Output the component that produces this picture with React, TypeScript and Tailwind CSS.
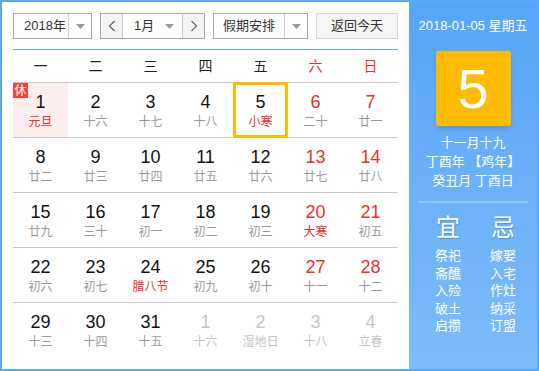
const days = [
  [
    { d: 1, l: "元旦", hol: true, fest: true },
    { d: 2, l: "十六" },
    { d: 3, l: "十七" },
    { d: 4, l: "十八" },
    { d: 5, l: "小寒", fest: true, sel: true },
    { d: 6, l: "二十", we: true },
    { d: 7, l: "廿一", we: true },
  ],
  [
    { d: 8, l: "廿二" },
    { d: 9, l: "廿三" },
    { d: 10, l: "廿四" },
    { d: 11, l: "廿五" },
    { d: 12, l: "廿六" },
    { d: 13, l: "廿七", we: true },
    { d: 14, l: "廿八", we: true },
  ],
  [
    { d: 15, l: "廿九" },
    { d: 16, l: "三十" },
    { d: 17, l: "初一" },
    { d: 18, l: "初二" },
    { d: 19, l: "初三" },
    { d: 20, l: "大寒", we: true, fest: true },
    { d: 21, l: "初五", we: true },
  ],
  [
    { d: 22, l: "初六" },
    { d: 23, l: "初七" },
    { d: 24, l: "腊八节", fest: true },
    { d: 25, l: "初九" },
    { d: 26, l: "初十" },
    { d: 27, l: "十一", we: true },
    { d: 28, l: "十二", we: true },
  ],
  [
    { d: 29, l: "十三" },
    { d: 30, l: "十四" },
    { d: 31, l: "十五" },
    { d: 1, l: "十六", other: true },
    { d: 2, l: "湿地日", other: true },
    { d: 3, l: "十八", other: true },
    { d: 4, l: "立春", other: true },
  ],
]

type Day = { d: number; l: string; hol?: boolean; fest?: boolean; sel?: boolean; we?: boolean; other?: boolean }

const weekdays = ["一", "二", "三", "四", "五", "六", "日"]
const yi = ["祭祀", "斋醮", "入殓", "破土", "启攒"]
const ji = ["嫁娶", "入宅", "作灶", "纳采", "订盟"]

function Caret() {
  return (
    <svg width="9" height="5" viewBox="0 0 9 5">
      <path d="M0 0h9L4.5 5z" fill="#999" />
    </svg>
  )
}

function Chevron({ dir }: { dir: "l" | "r" }) {
  return (
    <svg width="8" height="12" viewBox="0 0 8 12">
      <path
        d={dir === "l" ? "M6.5 1L1.5 6l5 5" : "M1.5 1l5 5-5 5"}
        stroke="#666"
        strokeWidth="1.2"
        fill="none"
      />
    </svg>
  )
}

function Cell({ day }: { day: Day }) {
  const numColor = day.other ? "text-[#c4c4c4]" : day.we ? "text-[#e8302e]" : "text-[#111]"
  const lunarColor = day.other ? "text-[#c4c4c4]" : day.fest ? "text-[#e8302e]" : "text-[#999]"
  return (
    <div className={`relative flex flex-col items-center ${day.hol ? "bg-[#fdeeee]" : ""}`}>
      {day.hol && (
        <span className="absolute left-0 top-0 flex h-[15px] w-[15px] items-center justify-center bg-[#f0413c] text-[12px] leading-none text-white">
          休
        </span>
      )}
      {day.sel && <div className="absolute inset-x-0 -top-px -bottom-px border-[3px] border-[#ffbb00]" />}
      <div className={`pt-[9px] text-[18px] leading-[20px] ${numColor}`}>{day.d}</div>
      <div className={`mt-[2px] text-[12px] leading-[16px] ${lunarColor}`}>{day.l}</div>
    </div>
  )
}

export default function App() {
  return (
    <div className="flex h-[371px] w-[539px] border-2 border-[#5ca8f5] bg-white font-['Liberation_Sans','Noto_Sans_CJK_SC',sans-serif]">
      <div className="w-[407px] px-[11px] pt-[11px]">
        <div className="flex h-[26px] justify-between text-[13px] text-[#333]">
          <div className="flex w-[79px] border border-[#a6a6a6]">
            <div className="flex flex-1 items-center pl-[10px]">2018年</div>
            <div className="flex w-[23px] items-center justify-center border-l border-[#c8c8c8]">
              <Caret />
            </div>
          </div>
          <div className="flex w-[105px] border border-[#a6a6a6]">
            <div className="flex w-[22px] items-center justify-center border-r border-[#c8c8c8] bg-[#f5f5f5]">
              <Chevron dir="l" />
            </div>
            <div className="flex flex-1 items-center justify-between pl-[11px] pr-[8px]">
              <span>1月</span>
              <Caret />
            </div>
            <div className="flex w-[22px] items-center justify-center border-l border-[#c8c8c8] bg-[#f5f5f5]">
              <Chevron dir="r" />
            </div>
          </div>
          <div className="flex w-[95px] border border-[#a6a6a6]">
            <div className="flex flex-1 items-center justify-center">假期安排</div>
            <div className="flex w-[23px] items-center justify-center border-l border-[#c8c8c8]">
              <Caret />
            </div>
          </div>
          <div className="flex w-[82px] items-center justify-center border border-[#d4d4d4] bg-[#f6f6f6]">
            返回今天
          </div>
        </div>
        <div className="mt-[10px] h-px bg-[#5ca8f5]" />
        <div className="grid h-[33px] grid-cols-7 border-b border-[#c8c8c8] text-[14px]">
          {weekdays.map((w, i) => (
            <div key={w} className={`flex items-center justify-center ${i > 4 ? "text-[#e8302e]" : "text-[#222]"}`}>
              {w}
            </div>
          ))}
        </div>
        {days.map((row, r) => (
          <div
            key={r}
            className={`grid h-[55px] grid-cols-7 ${r < days.length - 1 ? "border-b border-[#c8c8c8]" : ""}`}
          >
            {row.map((day, i) => (
              <Cell key={i} day={day} />
            ))}
          </div>
        ))}
      </div>
      <div className="flex flex-1 flex-col items-center bg-linear-to-b from-[#56a5f7] to-[#7dbcf9] pt-[14px] text-white">
        <div className="text-[13px] leading-[20px]">2018-01-05 星期五</div>
        <div className="mt-[15px] flex h-[75px] w-[75px] items-center justify-center rounded-[3px] bg-[#ffbb00] text-[56px] leading-none shadow-md">
          5
        </div>
        <div className="mt-[7px] flex flex-col items-center text-[13px] leading-[19px]">
          <div>十一月十九</div>
          <div>丁酉年 【鸡年】</div>
          <div>癸丑月 丁酉日</div>
        </div>
        <div className="mt-[11px] h-[2px] w-[110px] bg-white/30" />
        <div className="mt-[10px] flex gap-[29px] pl-[5px]">
          {[
            { t: "宜", list: yi },
            { t: "忌", list: ji },
          ].map((col) => (
            <div key={col.t} className="flex flex-col items-center">
              <div className="text-[24px] leading-[30px] [text-shadow:1px_1px_1px_rgba(0,0,0,0.2)]">{col.t}</div>
              <div className="mt-[4px] flex flex-col items-center text-[13px] leading-[17.5px]">
                {col.list.map((x) => (
                  <div key={x}>{x}</div>
                ))}
              </div>
            </div>
          ))}
        </div>
      </div>
    </div>
  )
}
